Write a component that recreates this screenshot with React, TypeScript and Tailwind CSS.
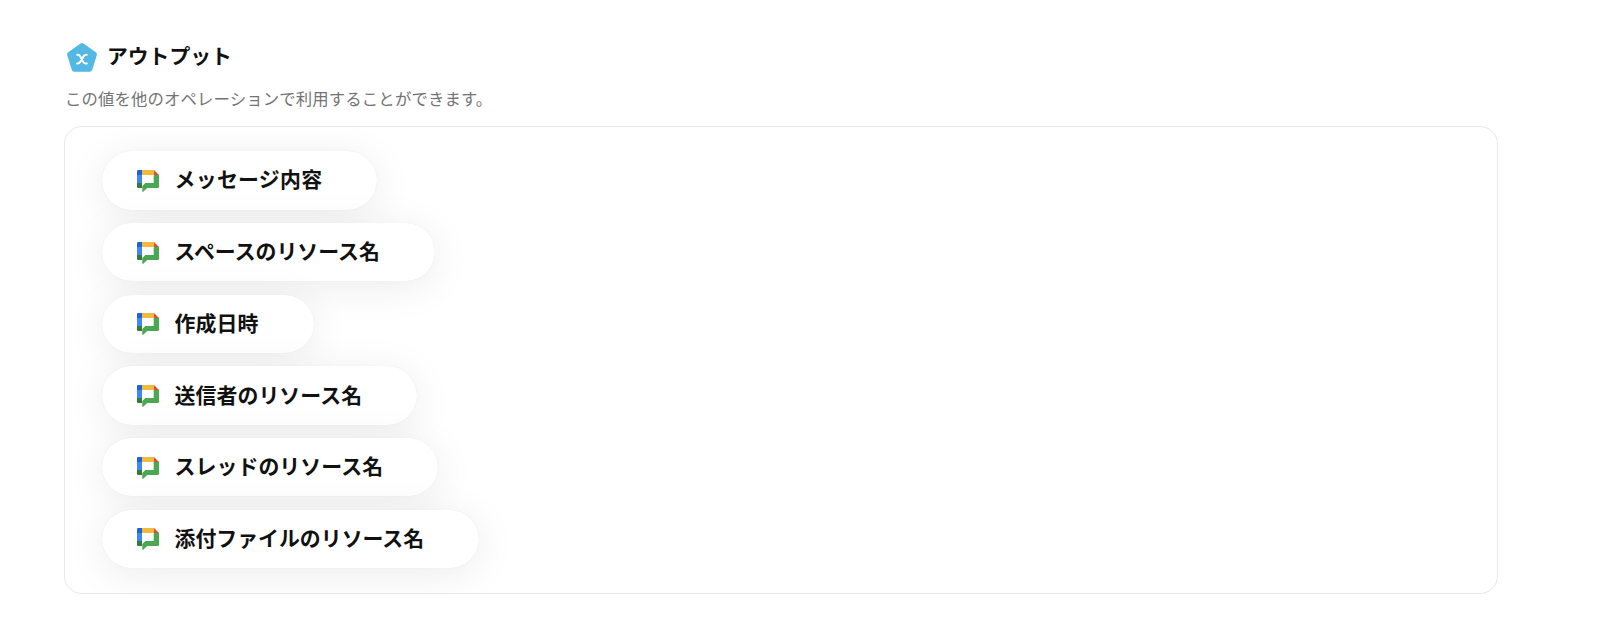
const OUTPUTS = [
  { label: "メッセージ内容", style: "w-[275px] tracking-[0.3px]" },
  { label: "スペースのリソース名", style: "w-[333px]" },
  { label: "作成日時", style: "w-[212px] tracking-[0.15px]" },
  { label: "送信者のリソース名", style: "w-[315px] tracking-[0.08px]" },
  { label: "スレッドのリソース名", style: "w-[336px] tracking-[0.08px]" },
  { label: "添付ファイルのリソース名", style: "w-[377px]" },
];

function OutputIcon() {
  return (
    <svg viewBox="0 0 32 32" className="h-8 w-8 shrink-0" fill="none">
      <path
        d="M16 3.6 28.4 12.4 23.8 27.3H8.2L3.6 12.4Z"
        fill="#54b8e4"
        stroke="#54b8e4"
        strokeWidth="5"
        strokeLinejoin="round"
      />
      <path
        d="M11.2 12.8h.7c1.2 0 1.8.6 2.3 1.6l2.9 5.5c.6 1.1 1.2 1.6 2.4 1.6h1.3M20.8 12.8h-.7c-1.2 0-1.8.6-2.5 1.6l-3.4 5.5c-.7 1.1-1.3 1.6-2.5 1.6h-.6"
        stroke="#fff"
        strokeWidth="2"
        strokeLinecap="round"
      />
    </svg>
  );
}

function ChatIcon() {
  return (
    <svg viewBox="0 0 22 22" className="h-[22px] w-[22px] shrink-0">
      <path d="M0 5h5v12H0z" fill="#4285f4" />
      <path d="M1.2 0H5v5H0V1.2Q0 0 1.2 0z" fill="#1e63d6" />
      <path d="M5 0h12v5H5z" fill="#f2ba3c" />
      <path d="m17 0 5 5h-5z" fill="#e14b3f" />
      <path d="M16.7 5H22v11.8q0 1.2-1.2 1.2H10.2l-4 3.7q-.9.7-.9-.5V16l3-3h8.4z" fill="#4aa853" />
      <path d="M0 13h5v5H1.2Q0 18 0 16.8z" fill="#317c38" />
    </svg>
  );
}

function OutputPill({ label, style }: { label: string; style: string }) {
  return (
    <div
      className={`flex h-[58.5px] items-center gap-[15.5px] rounded-full bg-white pl-[35px] pt-px shadow-[0_0_1px_rgba(0,0,0,0.1),0_6px_40px_rgba(0,0,0,0.08)] ${style}`}
    >
      <ChatIcon />
      <span className="mb-[5px] whitespace-nowrap text-[20.9px] font-bold leading-8">{label}</span>
    </div>
  );
}

export default function App() {
  return (
    <main className="h-[639px] overflow-hidden bg-white pl-16 pt-[42px] font-['Noto_Sans_CJK_JP',sans-serif] text-[#111]">
      <div className="flex h-8 items-center gap-[9px] pl-0.5">
        <OutputIcon />
        <h2 className="mb-[6px] text-[20.8px] font-bold leading-8">アウトプット</h2>
      </div>
      <p className="mt-3 pl-px text-[16.4px] leading-6 tracking-[0.12px] text-[#737373]">
        この値を他のオペレーションで利用することができます。
      </p>
      <section className="mt-4 flex h-[468px] w-[1434px] flex-col gap-[13.2px] overflow-hidden rounded-[18px] border border-[#e8e8e8] pl-[37px] pt-[24.2px]">
        {OUTPUTS.map((output) => (
          <OutputPill key={output.label} {...output} />
        ))}
      </section>
    </main>
  );
}
